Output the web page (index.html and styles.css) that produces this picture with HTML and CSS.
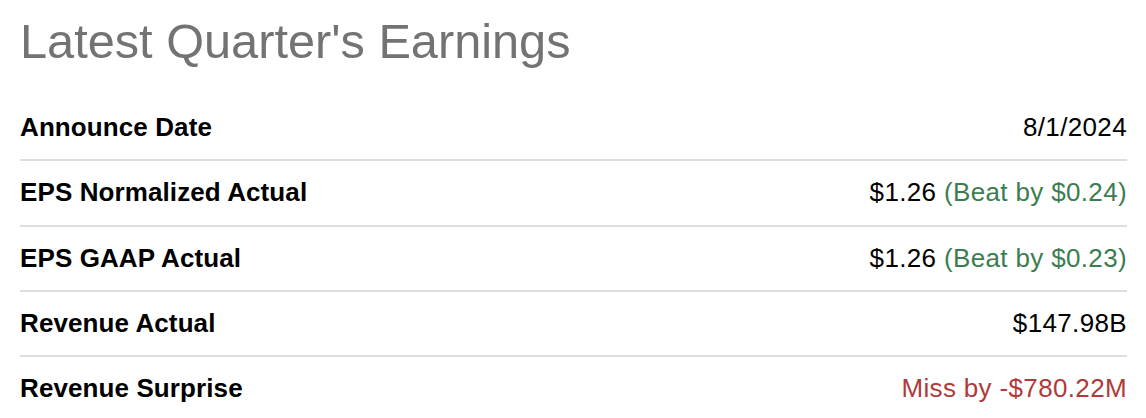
FILE: index.html
```html
<!DOCTYPE html>
<html lang="en">
<head>
<meta charset="utf-8">
<title>Latest Quarter's Earnings</title>
<link rel="stylesheet" href="styles.css">
</head>
<body>
<section class="earnings">
  <h1 class="earnings-title">Latest Quarter's Earnings</h1>
  <div class="earnings-list">
    <div class="row">
      <span class="label">Announce Date</span>
      <span class="value">8/1/2024</span>
    </div>
    <div class="row">
      <span class="label">EPS Normalized Actual</span>
      <span class="value">$1.26 <span class="beat">(Beat by $0.24)</span></span>
    </div>
    <div class="row">
      <span class="label">EPS GAAP Actual</span>
      <span class="value">$1.26 <span class="beat">(Beat by $0.23)</span></span>
    </div>
    <div class="row">
      <span class="label">Revenue Actual</span>
      <span class="value">$147.98B</span>
    </div>
    <div class="row">
      <span class="label">Revenue Surprise</span>
      <span class="value"><span class="miss">Miss by -$780.22M</span></span>
    </div>
  </div>
</section>
</body>
</html>
```

FILE: styles.css
```css
html, body {
  margin: 0;
  padding: 0;
  background: #ffffff;
}

body {
  font-family: "Liberation Sans", Arial, sans-serif;
  color: #000000;
}

.earnings {
  padding: 0 19px 0 20px;
}

.earnings-title {
  margin: 13px 0 27px 0;
  font-size: 48.7px;
  font-weight: 400;
  line-height: normal;
  color: #737373;
}

.row {
  display: flex;
  justify-content: space-between;
  align-items: center;
  padding: 16px 0;
  line-height: 31.33px;
  font-size: 26px;
  border-bottom: 2px solid #dedede;
}

.label {
  font-weight: 700;
  letter-spacing: 0.1px;
}

.value {
  font-weight: 400;
  letter-spacing: 0.35px;
}

.beat {
  color: #3b7d4f;
}

.miss {
  color: #b03a3a;
}
```
